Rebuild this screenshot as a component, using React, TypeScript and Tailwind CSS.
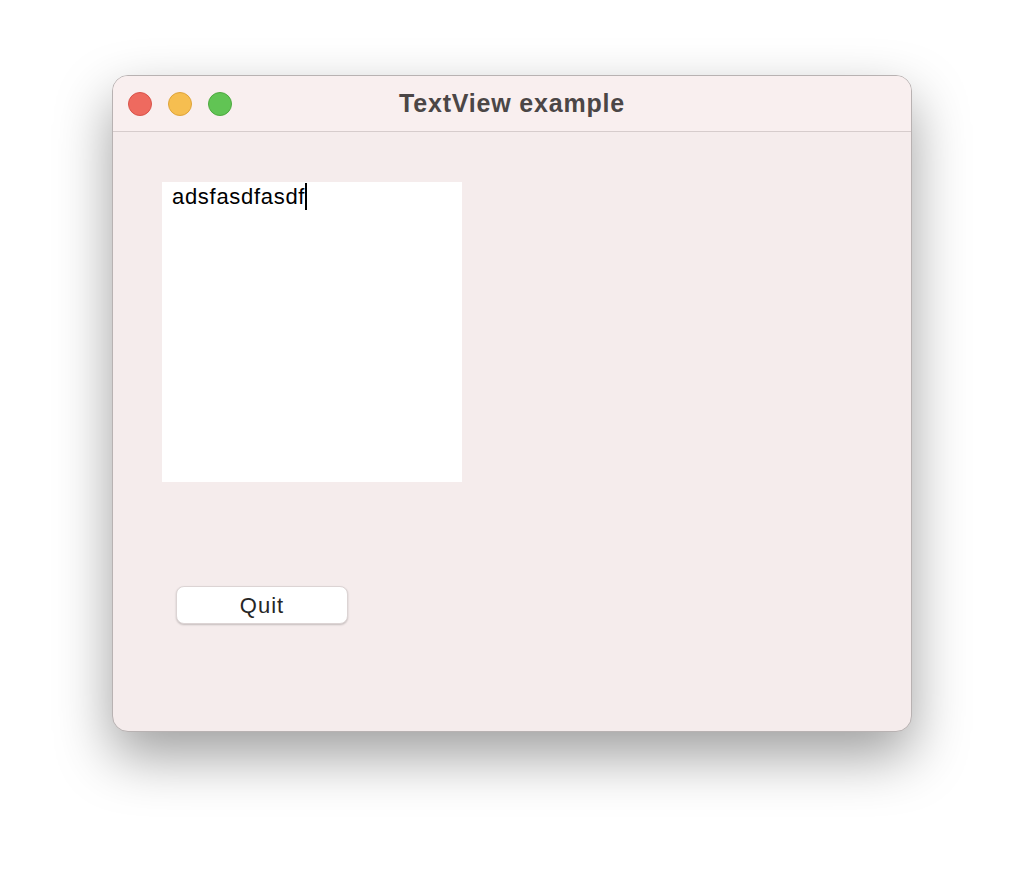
import React from 'react';

function TrafficLights() {
  return (
    <div className="flex items-center gap-4">
      <div className="w-6 h-6 rounded-full bg-[#ee6a5f] border border-[#d9534a]" />
      <div className="w-6 h-6 rounded-full bg-[#f6be50] border border-[#dfa43a]" />
      <div className="w-6 h-6 rounded-full bg-[#61c454] border border-[#4ea93f]" />
    </div>
  );
}

export default function App() {
  return (
    <div className="w-[1024px] h-[880px] bg-white pt-[75px] pl-[112px] font-['Liberation_Sans',Arial,sans-serif]">
      <div className="w-[800px] h-[657px] rounded-[16px] border border-[#b8b2b2] bg-[#f5ecec] overflow-hidden shadow-[0_24px_55px_rgba(0,0,0,0.38)] flex flex-col">
        <div className="relative h-[56px] shrink-0 bg-[#f9efef] border-b border-[#d6cccc] flex items-center pl-[15px]">
          <TrafficLights />
          <div className="absolute inset-0 flex items-center justify-center text-[25px] tracking-[0.8px] font-bold text-[#4b4646] pointer-events-none">
            TextView example
          </div>
        </div>
        <div className="flex flex-col pl-[49px] pt-[50px]">
          <div className="w-[300px] h-[300px] bg-white pl-[10px] pt-[1px]">
            <div className="flex items-start text-[22px] leading-[28px] text-black tracking-[0.7px]">
              <span>adsfasdfasdf</span>
              <span className="w-[2px] h-[27px] bg-black" />
            </div>
          </div>
          <button className="mt-[104px] ml-[14px] w-[172px] h-[38px] rounded-[8px] bg-white border border-[#dcd4d4] shadow-[0_1px_2px_rgba(0,0,0,0.2)] text-[22px] tracking-[1px] text-[#262626] flex items-center justify-center">
            Quit
          </button>
        </div>
      </div>
    </div>
  );
}
